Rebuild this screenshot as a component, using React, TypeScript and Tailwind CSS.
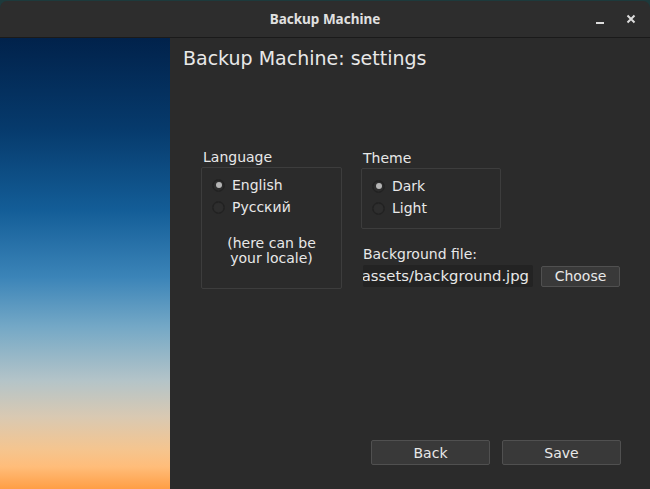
import React from "react";

function Radio({ checked, label }: { checked?: boolean; label: string }) {
  return (
    <div className="flex items-center h-[22px]">
      <div className="w-[13px] h-[13px] rounded-full border border-[#222] bg-[#2e2e2e] flex items-center justify-center shadow-[inset_0_0_1px_#000]">
        {checked && <div className="w-[6px] h-[6px] rounded-full bg-[#b5b5b5]" />}
      </div>
      <span className="ml-[7px]">{label}</span>
    </div>
  );
}

export default function App() {
  return (
    <div
      className="w-[650px] h-[489px] bg-[#1d3a3c] overflow-hidden text-[#e8e8e8] flex flex-col"
      style={{ fontFamily: '"DejaVu Sans", sans-serif' }}
    >
      <div className="mt-[1px] h-[37px] shrink-0 rounded-t-[7px] bg-[#2d2d2d] border-b border-[#1a1a1a] relative flex items-center justify-center">
        <span className="text-[13.5px] font-bold text-[#e0e0e0]" style={{ fontFamily: '"Noto Sans", sans-serif' }}>
          Backup Machine
        </span>
        <div className="absolute right-[14px] top-0 h-full flex items-center gap-[22px]">
          <div className="w-[8px] h-[2px] bg-[#dcdcdc] mt-[8px]" />
          <svg width="10" height="10" viewBox="0 0 10 10">
            <path d="M1.5 1.5 L8.5 8.5 M8.5 1.5 L1.5 8.5" stroke="#dcdcdc" strokeWidth="2" />
          </svg>
        </div>
      </div>
      <div className="flex flex-1 min-h-0">
        <div className="w-[170px] shrink-0 bg-[linear-gradient(180deg,#01224b_0%,#063a6c_20%,#135d97_38%,#3b84b8_53%,#74a8c6_64%,#b4c4c8_76%,#d9c9b2_84%,#f4c590_91%,#ffbd7a_95%,#ff9e45_100%)]" />
        <div className="flex-1 bg-[#2b2b2b] relative">
          <div className="absolute left-[13px] top-[8px] text-[19px] leading-[24px]">Backup Machine: settings</div>

          <div className="absolute left-[31px] top-[110px] w-[141px] text-[14px]">
            <div className="leading-[18px] ml-[2px]">Language</div>
            <div className="mt-[1px] h-[122px] border border-[#3d3d3d] rounded-[2px] pt-[6px] pl-[10px]">
              <Radio checked label="English" />
              <Radio label="Русский" />
              <div className="mt-[18px] -ml-[10px] text-center leading-[15px]">
                (here can be
                <br />
                your locale)
              </div>
            </div>
          </div>

          <div className="absolute left-[191px] top-[111px] w-[140px] text-[14px]">
            <div className="leading-[18px] ml-[2px]">Theme</div>
            <div className="mt-[1px] h-[61px] border border-[#3d3d3d] rounded-[2px] pt-[6px] pl-[10px]">
              <Radio checked label="Dark" />
              <Radio label="Light" />
            </div>
          </div>

          <div className="absolute left-[193px] top-[207px] text-[14px]">
            <div className="leading-[18px]">Background file:</div>
            <div className="mt-[2px] flex items-center gap-[8px]">
              <div className="w-[170px] h-[22px] bg-[#232323] rounded-[2px] overflow-hidden flex justify-end items-center pr-[4px] whitespace-nowrap text-[14.8px]">
                assets/background.jpg
              </div>
              <button className="w-[79px] h-[21px] bg-[#393939] border border-[#505050] rounded-[2px] text-[14px] leading-[18px] text-[#e8e8e8]">
                Choose
              </button>
            </div>
          </div>

          <div className="absolute left-[201px] top-[402px] flex gap-[12px] text-[14px]">
            <button className="w-[119px] h-[25px] bg-[#393939] border border-[#505050] rounded-[2px] leading-[18px] text-[#e8e8e8]">
              Back
            </button>
            <button className="w-[119px] h-[25px] bg-[#393939] border border-[#505050] rounded-[2px] leading-[18px] text-[#e8e8e8]">
              Save
            </button>
          </div>
        </div>
      </div>
    </div>
  );
}
